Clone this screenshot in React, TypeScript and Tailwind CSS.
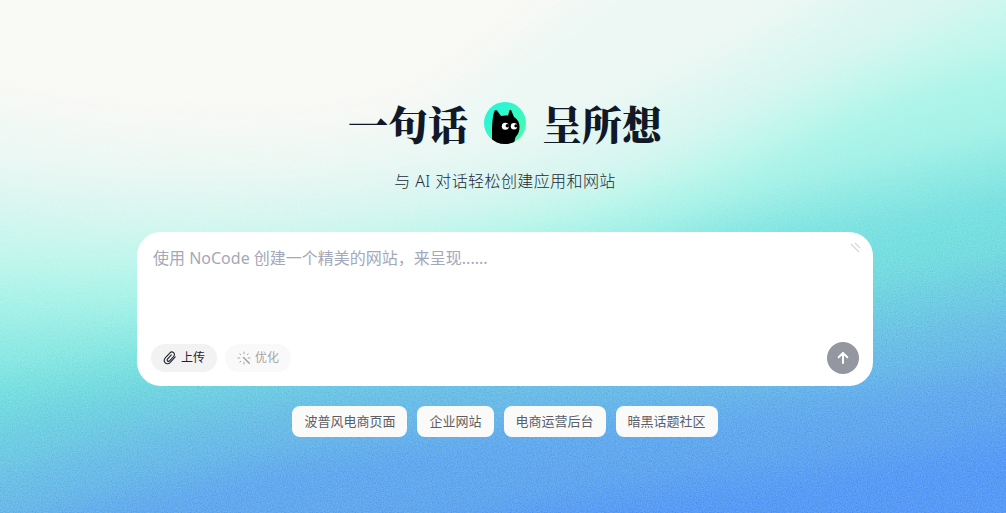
import { ComponentProps } from 'react';

const suggestions = ['波普风电商页面', '企业网站', '电商运营后台', '暗黑话题社区'];

// Each band covers everything below its curve, blurred into the next one.
const bands = [
    { color: '#edf8f4', d: 'M-200 112 L0 112 C180 150 380 150 460 85 C520 40 560 10 600 -20 L680 -200 L1300 -200 L1300 800 L-200 800 Z' },
    { color: '#dcf6f1', d: 'M-200 175 L0 175 C250 205 480 180 620 115 C720 70 790 30 860 -20 L900 -200 L1300 -200 L1300 800 L-200 800 Z' },
    { color: '#c5f7ed', d: 'M-200 222 L0 222 C250 250 560 220 720 130 C810 80 900 45 990 0 L1300 -160 L1300 800 L-200 800 Z' },
    { color: '#aaf3e9', d: 'M-200 275 L0 275 C250 280 560 245 740 165 C830 120 900 85 1006 60 L1300 -10 L1300 800 L-200 800 Z' },
    { color: '#8feae4', d: 'M-200 325 L0 325 C250 320 560 270 720 215 C820 185 900 165 1006 142 L1300 90 L1300 800 L-200 800 Z' },
    { color: '#78dfe0', d: 'M-200 375 L0 375 C250 345 560 290 720 245 C820 225 900 210 1006 188 L1300 130 L1300 800 L-200 800 Z' },
    { color: '#70cfe2', d: 'M-200 415 L0 415 C150 385 380 350 600 325 C780 305 900 285 1006 262 L1300 210 L1300 800 L-200 800 Z' },
    { color: '#6cbde7', d: 'M-200 470 L0 470 C150 425 300 390 500 370 C720 350 900 330 1006 308 L1300 250 L1300 800 L-200 800 Z' },
    { color: '#62a9ee', d: 'M-200 540 L0 530 C150 480 300 445 500 425 C720 405 900 385 1006 365 L1300 300 L1300 800 L-200 800 Z' },
    { color: '#579bf5', d: 'M250 590 C400 530 560 500 720 480 C840 465 920 450 1006 435 L1300 410 L1300 800 L250 800 Z' },
];

function Background() {
    return (
        <svg className="absolute inset-0 -z-10 h-full w-full" viewBox="0 0 1006 513" preserveAspectRatio="none" aria-hidden="true">
            <defs>
                <filter id="soften" filterUnits="userSpaceOnUse" x="-300" y="-300" width="1700" height="1200" colorInterpolationFilters="sRGB">
                    <feGaussianBlur stdDeviation="18" />
                </filter>
                <filter id="grain" x="0" y="0" width="100%" height="100%" colorInterpolationFilters="sRGB">
                    <feTurbulence type="fractalNoise" baseFrequency="0.8" numOctaves="2" seed="4" />
                    <feColorMatrix values="1 0 0 0 0  1 0 0 0 0  1 0 0 0 0  0 0 0 0 1" />
                </filter>
                <linearGradient id="grain-fade" x1="0.3" y1="0" x2="0.5" y2="1">
                    <stop offset="0.2" stopColor="#000" />
                    <stop offset="0.65" stopColor="#fff" />
                </linearGradient>
                <mask id="grain-mask">
                    <rect width="1006" height="513" fill="url(#grain-fade)" />
                </mask>
            </defs>
            <rect width="1006" height="513" fill="#f9f9f6" />
            {bands.map(({ color, d }) => (
                <path key={color} d={d} fill={color} filter="url(#soften)" />
            ))}
            <g mask="url(#grain-mask)" className="opacity-40 mix-blend-soft-light">
                <rect width="1006" height="513" filter="url(#grain)" />
            </g>
        </svg>
    );
}

function CatLogo() {
    return (
        <svg className="size-[42px]" viewBox="0 0 42 42" aria-hidden="true">
            <defs>
                <linearGradient id="logo-fill" x1="0" y1="0" x2="1" y2="1">
                    <stop offset="0" stopColor="#1ff5e0" />
                    <stop offset="1" stopColor="#4dfaa8" />
                </linearGradient>
                <clipPath id="logo-clip">
                    <circle cx="21" cy="21" r="21" />
                </clipPath>
            </defs>
            <circle cx="21" cy="21" r="21" fill="url(#logo-fill)" />
            <g clipPath="url(#logo-clip)">
                <path d="M8 42V31C8 23 8.500 14 10.500 9C11 7.600 12.200 7.600 13 8.600L17 14C19.500 13.300 22 13.300 24 13.600L25.500 8.500C26 7.500 26.800 7.600 27.300 8.500L30 15C34 17.500 35.500 21 35.500 25C35.500 29 34.500 32 32 34.500C31 36 30.500 38 30.500 42Z" fill="#000" />
                <circle cx="21.300" cy="24.200" r="3.500" fill="#fff" />
                <circle cx="30" cy="24.200" r="3.200" fill="#fff" />
                <circle cx="23.300" cy="23.800" r="1.700" fill="#000" />
                <circle cx="31.900" cy="23.800" r="1.600" fill="#000" />
            </g>
        </svg>
    );
}

function ClipIcon() {
    return (
        <svg className="size-3.5" viewBox="0 0 14 14" fill="none" stroke="currentColor" strokeWidth="1.1" strokeLinecap="round" aria-hidden="true">
            <path d="M12.200 5.800 7.500 11.200C6 12.900 3.700 13.200 2.300 11.900C0.900 10.600 1 8.400 2.500 6.700L6.700 2.100C7.800 0.900 9.500 0.700 10.600 1.700C11.700 2.700 11.700 4.300 10.600 5.500L6.800 9.700C6.100 10.500 5.200 10.600 4.600 10C4 9.400 4.100 8.600 4.700 7.900L8.300 3.900" />
        </svg>
    );
}

function WandIcon() {
    return (
        <svg className="size-3.5" viewBox="0 0 14 14" fill="none" stroke="currentColor" strokeLinecap="round" aria-hidden="true">
            <path d="M7 1v1.800M2.800 2.800l1 1M11.200 2.800l-1 1M1 7h1.800M11.200 7H13M2.800 11.200l1-1M7 11.200V13" />
            <path d="M6.500 6.500 12.300 12.300" strokeWidth="1.600" />
        </svg>
    );
}

function ArrowUpIcon() {
    return (
        <svg className="size-4" viewBox="0 0 16 16" fill="none" stroke="currentColor" strokeWidth="2" strokeLinecap="round" strokeLinejoin="round" aria-hidden="true">
            <path d="M8 13V3M3.700 7.200 8 2.900l4.300 4.300" />
        </svg>
    );
}

function ResizeGrip() {
    return (
        <svg className="absolute top-2.5 right-3 size-3" viewBox="0 0 12 12" stroke="#d6d6d6" strokeWidth="1.2" aria-hidden="true">
            <path d="M2 2l8 8M6 1l5 5" />
        </svg>
    );
}

function PillButton({ className, ...props }: ComponentProps<'button'>) {
    return <button type="button" className={`flex h-7 items-center gap-1 rounded-full px-3 text-xs ${className}`} {...props} />;
}

export default function App() {
    return (
        <main className="relative isolate flex min-h-screen flex-col items-center overflow-hidden pt-[99px] pr-4 pb-8 pl-5 font-['Noto_Sans','Noto_Sans_CJK_SC',sans-serif]">
            <Background />
            <h1 className="flex items-center gap-4 font-['Noto_Serif_CJK_SC','Noto_Serif_SC','Noto_Sans_CJK_SC',serif] text-[40px] leading-12 font-black text-[#111827]">
                <span>一句话</span>
                <CatLogo />
                <span>呈所想</span>
            </h1>
            <p className="mt-[22px] text-base leading-6 font-light tracking-wide text-[#1f2937]">与 AI 对话轻松创建应用和网站</p>

            <form className="relative mt-[39px] flex w-full max-w-[736px] flex-col rounded-3xl bg-white px-3.5 pt-3.5 pb-3">
                <textarea
                    aria-label="描述你的网站"
                    className="h-24 w-full resize-none px-0.5 text-base leading-6 text-[#111827] outline-none placeholder:text-[#a3a9b8]"
                    placeholder="使用 NoCode 创建一个精美的网站，来呈现......"
                />
                <ResizeGrip />
                <div className="flex items-center gap-2">
                    <PillButton className="bg-[#f2f2f2] text-[#1f2430]">
                        <ClipIcon />
                        上传
                    </PillButton>
                    <PillButton className="bg-[#f9f9f9] text-[#a5a5a5]" disabled>
                        <WandIcon />
                        优化
                    </PillButton>
                    <button type="submit" aria-label="发送" className="ml-auto flex size-8 items-center justify-center rounded-full bg-[#9496a0] text-white">
                        <ArrowUpIcon />
                    </button>
                </div>
            </form>

            <div className="mt-5 flex flex-wrap justify-center gap-2.5">
                {suggestions.map((label) => (
                    <button key={label} type="button" className="rounded-lg bg-[#fafaf9] px-3 py-1.5 text-[13px] leading-[19px] text-[#5b5e66]">
                        {label}
                    </button>
                ))}
            </div>
        </main>
    );
}
